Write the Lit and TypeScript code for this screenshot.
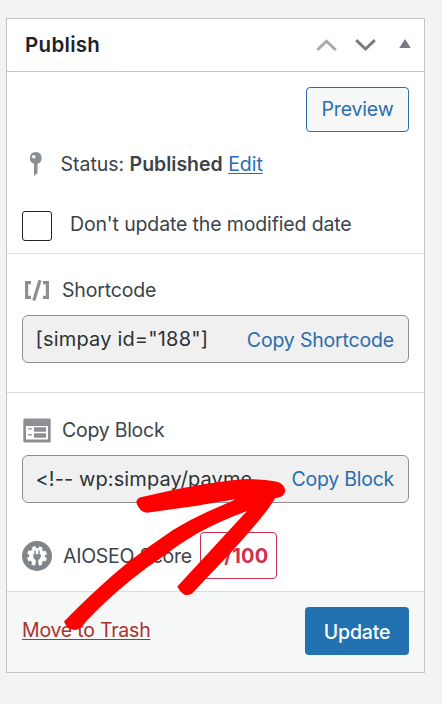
import { LitElement, html, css } from "lit";
import { customElement } from "lit/decorators.js";

@customElement("copy-field")
export class CopyField extends LitElement {
  static properties = { value: {}, action: {} };
  declare value: string;
  declare action: string;
  static styles = css`
    :host { display: flex; align-items: center; justify-content: space-between; box-sizing: border-box;
      height: 48px; padding: 0 14px 0 12.5px; border: 1px solid #8c8f94; border-radius: 6px; background: #f0f0f0; }
    .value { color: #2c3338; font-size: 20px; line-height: 32px; letter-spacing: var(--value-spacing, 0.18px); white-space: nowrap; padding-bottom: 1px; }
    .action { color: #2a6dae; font-size: 19.5px; line-height: 32px; letter-spacing: var(--action-spacing, -0.18px); white-space: nowrap; padding-top: var(--action-drop, 0); }
  `;
  render() {
    return html`<span class="value">${this.value}</span><a class="action">${this.action}</a>`;
  }
}

@customElement("app-root")
export class AppRoot extends LitElement {
  static styles = css`
    :host { display: block; box-sizing: border-box; position: relative; width: 442px; height: 704px; overflow: hidden;
      padding: 18px 17px 31px 6px; background: #f2f3f5; color: #3c434a; font-family: Inter, "Liberation Sans", sans-serif;
      font-size: 19.5px; line-height: 32px; letter-spacing: -0.17px; }
    .panel { box-sizing: border-box; width: 419px; height: 655px; border: 1px solid #c3c4c7; background: #fff; }
    .header { display: flex; align-items: center; justify-content: space-between; height: 52px; padding: 0 12px 0 18px; border-bottom: 1px solid #c3c4c7; }
    .title { color: #1d2327; font-size: 20.5px; font-weight: 600; letter-spacing: 0.3px; }
    .order { display: block; }
    .section { padding: 0 15px; border-bottom: 1px solid #dcdcde; }
    .main { padding-top: 15px; padding-bottom: 12px; }
    .short { padding-top: 20px; padding-bottom: 29px; }
    .block { padding-top: 21px; padding-bottom: 12px; }
    .short copy-field { --action-drop: 2px; }
    .block copy-field { --value-spacing: 0.1px; --action-spacing: -0.24px; }
    .end { display: flex; justify-content: flex-end; }
    .preview { box-sizing: border-box; width: 103px; height: 45px; border: 1px solid #2a6dae; border-radius: 4px; background: #f6f7f7;
      color: #2a6dae; text-align: center; line-height: 43px; }
    .row { display: flex; align-items: center; white-space: nowrap; }
    .status { height: 40px; margin-top: 12px; gap: 17.5px; padding-left: 5px; letter-spacing: -0.02px; }
    .status b { font-weight: 600; }
    .edit { color: #2a6dae; text-decoration: underline; text-decoration-thickness: 1px; text-underline-offset: 2px; }
    .check { height: 30px; margin-top: 27px; gap: 18px; letter-spacing: -0.14px; }
    .box { box-sizing: border-box; width: 30px; height: 30px; border: 1px solid #1d2327; border-radius: 3px; }
    .check span { padding-bottom: 4px; }
    .label { height: 32px; margin-bottom: 9px; gap: 11px; }
    .block .label { letter-spacing: -0.26px; }
    .score { height: 47px; margin-top: 29px; letter-spacing: -0.26px; }
    .score-name { margin-left: 11px; width: 137px; }
    .badge { box-sizing: border-box; width: 77px; height: 47px; padding-left: 2px; border: 1px solid #c9304f; border-radius: 4px; color: #d0304f;
      font-size: 20px; font-weight: 700; line-height: 46px; text-align: center; letter-spacing: 0.15px; }
    .footer { display: flex; align-items: center; justify-content: space-between; padding: 15px 15px 17px; background: #f6f7f7; }
    .trash { color: #a83232; text-decoration: underline; text-decoration-thickness: 1px; text-underline-offset: 2px; letter-spacing: -0.22px; padding-bottom: 2px; }
    .update { width: 104px; height: 48px; border-radius: 4px; background: #2271b1; color: #fff; font-weight: 500; line-height: 50px; text-align: center; }
    .arrow { position: absolute; left: 0; top: 0; pointer-events: none; }
    svg { flex: none; }
  `;

  render() {
    return html`
      <div class="panel">
        <div class="header">
          <span class="title">Publish</span>
          <svg class="order" width="96" height="20" viewBox="0 0 96 20" fill="none">
            <path d="M1.200 15 10.500 6.200 19.800 15" stroke="#a7aaad" stroke-width="3"/>
            <path d="M40.200 5.200 49.500 14 58.800 5.200" stroke="#787c82" stroke-width="3"/>
            <path d="M83.200 13 89 4 94.800 13Z" fill="#787c82"/>
          </svg>
        </div>

        <div class="section main">
          <div class="end"><div class="preview">Preview</div></div>
          <div class="row status">
            <svg width="16" height="26" viewBox="0 0 16 26">
              <path fill="#8c8f94" fill-rule="evenodd" d="M8.5 1a6 6 0 0 1 2 11.7V22L7 25V12.7A6 6 0 0 1 8.500 1ZM6.700 3.900a1.800 1.800 0 1 0 .1 3.600 1.800 1.800 0 0 0-.1-3.600Z"/>
            </svg>
            <span>Status: <b>Published</b> <a class="edit">Edit</a></span>
          </div>
          <div class="row check"><i class="box"></i><span>Don't update the modified date</span></div>
        </div>

        <div class="section short">
          <div class="row label">
            <svg width="29" height="24" viewBox="0 0 29 24" fill="none" stroke="#8c8f94" stroke-width="3.2">
              <path d="M9 4.600H4.600V19.400H9M21 4.600H25.400V19.400H21"/><path d="M18 2.300 11.800 22.500"/>
            </svg>
            <span>Shortcode</span>
          </div>
          <copy-field value='[simpay id="188"]' action="Copy Shortcode"></copy-field>
        </div>

        <div class="section block">
          <div class="row label">
            <svg width="29" height="26" viewBox="0 0 29 26">
              <rect x="1.300" y="1.500" width="27.400" height="24" rx="1.500" fill="#8c8f94"/>
              <rect x="4" y="9" width="22" height="13.500" fill="#fff"/>
              <path fill="#8c8f94" d="M12 10.300h12v4.500H12ZM12 16.200h12V20.800H12ZM6 11.300h4v1.300H6ZM6 17.300h4v1.300H6Z"/>
            </svg>
            <span>Copy Block</span>
          </div>
          <copy-field value="<!-- wp:simpay/payme" action="Copy Block"></copy-field>
          <div class="row score">
            <svg width="30" height="30" viewBox="0 0 30 30">
              <circle cx="15" cy="15" r="15" fill="#808589"/>
              <circle cx="15" cy="15" r="8" fill="#fff"/>
              <circle cx="15" cy="15" r="8.600" fill="none" stroke="#fff" stroke-width="2.800" stroke-dasharray="3.700 3.054" stroke-dashoffset="-1.527"/>
              <path fill="#808589" d="M12.300 9.500h1.400V13.300h2.600V9.500h1.400V13.300h1V16.500L17 18.700h-.7V22l1.200 4h-5l1.200-4V18.700H13L11.300 16.500V13.300h1Z"/>
            </svg>
            <span class="score-name">AIOSEO Score</span>
            <span class="badge">0/100</span>
          </div>
        </div>

        <div class="footer">
          <a class="trash">Move to Trash</a>
          <div class="update">Update</div>
        </div>
      </div>

      <svg class="arrow" width="442" height="704" viewBox="0 0 442 704">
        <path fill="#f00" d="M64 621.500C81 604 107 579 130 560.700Q150 545.500 173 530Q190 519.500 208 511.500L236 499.300Q217 502 197 505.700L147 512.700Q142 512.500 139.500 508.500Q135.500 503 136.700 500.500Q138 497.500 143 496.700L180 488.500Q206 483.500 230 480.500Q256 477.500 276 481.500Q284.500 483.500 285.300 490.500Q285 497 275 498.300Q270 507 263 515.500Q248 534 230 553.500L192 593.500Q188 596 184 594.500Q179 590.500 177.300 586.500L247 511Q220 521 197 533.500Q179 544 163 556.500Q146 567.500 130 580.700Q105 601 86 621.500Q81 629.500 75 630Q67 629.500 64 621.500Z"/>
      </svg>
    `;
  }
}
